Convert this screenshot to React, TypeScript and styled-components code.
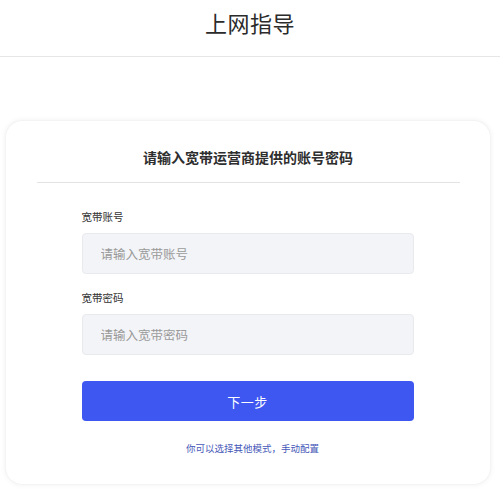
import React from "react";
import styled, { createGlobalStyle } from "styled-components";

const Global = createGlobalStyle`
  html, body { margin: 0; padding: 0; background: #ffffff; }
  body { font-family: "Noto Sans CJK SC", "Noto Sans", sans-serif; color: #333; }
  * { box-sizing: border-box; }
`;

const Page = styled.div`
  width: 500px;
  height: 490px;
  display: flex;
  flex-direction: column;
  overflow: hidden;
`;

const Header = styled.header`
  height: 57px;
  border-bottom: 1px solid #e6e6e6;
  display: flex;
  justify-content: center;
  padding-top: 6px;
`;

const Title = styled.h1`
  margin: 0;
  font-size: 22px;
  font-weight: 400;
  line-height: 32px;
  color: #2b2b2b;
  letter-spacing: 0.5px;
`;

const Card = styled.section`
  margin: 64px 0 0 6px;
  width: 484px;
  height: 363px;
  background: #fff;
  border-radius: 16px;
  box-shadow: 0 0 6px rgba(0, 0, 0, 0.08), 0 0 2px rgba(0, 0, 0, 0.05);
  display: flex;
  flex-direction: column;
  align-items: center;
  padding-top: 25px;
`;

const CardTitle = styled.h2`
  margin: 0;
  font-size: 14px;
  font-weight: 700;
  line-height: 22px;
  color: #2e2e2e;
`;

const Divider = styled.hr`
  align-self: stretch;
  margin: 14px 30px 0 31px;
  border: none;
  border-top: 1px solid #e3e3e3;
`;

const Form = styled.form`
  width: 332px;
  display: flex;
  flex-direction: column;
  margin-top: 26px;
  margin-right: 1px;
`;

const Label = styled.label<{ $gap?: number }>`
  font-size: 10.5px;
  line-height: 16px;
  color: #333;
  margin-top: ${(p) => p.$gap ?? 0}px;
`;

const Input = styled.input`
  margin-top: 8px;
  height: 41px;
  background: #f3f4f7;
  border: 1px solid #e9eaee;
  border-radius: 4px;
  padding: 0 18px;
  font-family: inherit;
  font-size: 12.5px;
  color: #333;
  outline: none;
  &::placeholder { color: #9a9a9a; }
`;

const Button = styled.button`
  margin-top: 26px;
  height: 40px;
  border: none;
  border-radius: 4px;
  background: #3e57f1;
  color: #fff;
  font-family: inherit;
  font-size: 13px;
  letter-spacing: 0.5px;
`;

const Link = styled.a`
  margin: 20px 0 0 10px;
  align-self: center;
  font-size: 9.5px;
  line-height: 14px;
  color: #4658b8;
  text-decoration: none;
`;

export default function App() {
  return (
    <Page>
      <Global />
      <Header>
        <Title>上网指导</Title>
      </Header>
      <Card>
        <CardTitle>请输入宽带运营商提供的账号密码</CardTitle>
        <Divider />
        <Form onSubmit={(e) => e.preventDefault()}>
          <Label>宽带账号</Label>
          <Input placeholder="请输入宽带账号" />
          <Label $gap={16}>宽带密码</Label>
          <Input type="password" placeholder="请输入宽带密码" />
          <Button type="submit">下一步</Button>
          <Link href="#">你可以选择其他模式，手动配置</Link>
        </Form>
      </Card>
    </Page>
  );
}
